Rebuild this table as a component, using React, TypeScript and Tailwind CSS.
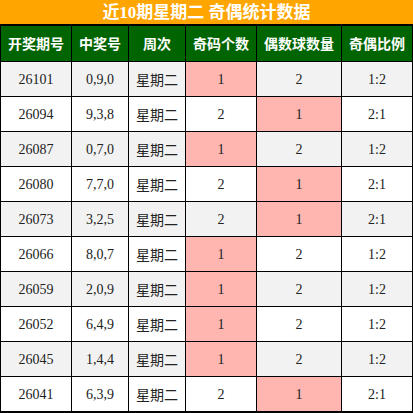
import React from 'react';

const rows = [
  ['26101', '0,9,0', 1, 2],
  ['26094', '9,3,8', 2, 1],
  ['26087', '0,7,0', 1, 2],
  ['26080', '7,7,0', 2, 1],
  ['26073', '3,2,5', 2, 1],
  ['26066', '8,0,7', 1, 2],
  ['26059', '2,0,9', 1, 2],
  ['26052', '6,4,9', 1, 2],
  ['26045', '1,4,4', 1, 2],
  ['26041', '6,3,9', 2, 1],
] as const;

const cols = 'grid grid-cols-[70px_56px_56px_70px_84px_70px] gap-x-px';
const headers = ['开奖期号', '中奖号', '周次', '奇码个数', '偶数球数量', '奇偶比例'];

export default function App() {
  return (
    <div
      className="w-[413px] h-[413px] bg-black text-[14px] text-[#222]"
      style={{ fontFamily: '"Liberation Serif", "Noto Sans CJK SC", serif' }}
    >
      <div className="h-[24px] bg-[#ffa500] flex items-center justify-center text-white font-bold text-[17px] leading-none">
        近10期星期二 奇偶统计数据
      </div>
      <div className="pt-[2px] pl-px pr-px flex flex-col gap-y-px">
        <div className={`${cols} h-[35px]`}>
          {headers.map((h) => (
            <div
              key={h}
              className="bg-[#006400] text-white font-bold flex items-center justify-center"
              style={{ fontFamily: '"Noto Sans CJK SC", sans-serif' }}
            >
              {h}
            </div>
          ))}
        </div>
        {rows.map(([issue, nums, odd, even], i) => {
          const bg = i % 2 === 0 ? 'bg-[#f2f2f2]' : 'bg-white';
          return (
            <div key={issue} className={`${cols} h-[34px]`}>
              <div className={`${bg} flex items-center justify-center`}>{issue}</div>
              <div className={`${bg} flex items-center justify-center`}>{nums}</div>
              <div className={`${bg} flex items-center justify-center`} style={{ fontFamily: '"Noto Sans CJK SC", sans-serif' }}>
                星期二
              </div>
              <div className={`${odd === 1 ? 'bg-[#ffb6b1]' : bg} flex items-center justify-center`}>{odd}</div>
              <div className={`${even === 1 ? 'bg-[#ffb6b1]' : bg} flex items-center justify-center`}>{even}</div>
              <div className={`${bg} flex items-center justify-center`}>{`${odd}:${even}`}</div>
            </div>
          );
        })}
      </div>
    </div>
  );
}
